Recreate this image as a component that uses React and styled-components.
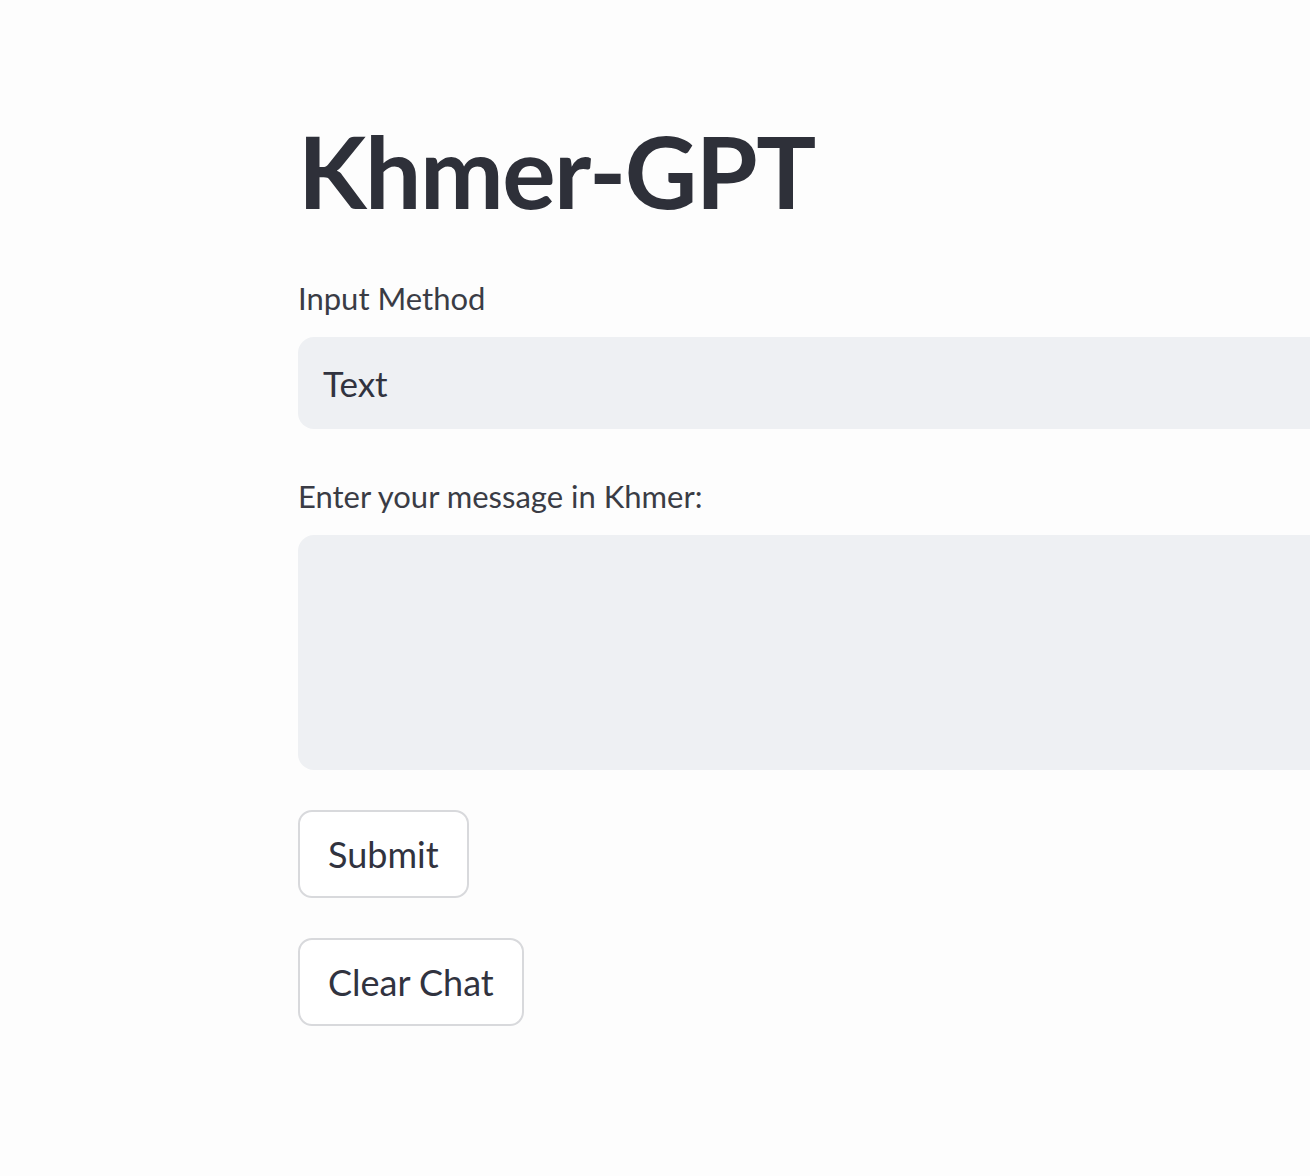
import React from 'react';
import styled, { createGlobalStyle } from 'styled-components';

const GlobalStyle = createGlobalStyle`
  html, body {
    margin: 0;
    padding: 0;
    background: #fdfdfd;
    overflow: hidden;
  }
  body {
    font-family: Lato, "Open Sans", sans-serif;
    color: #31333f;
  }
`;

const Page = styled.main`
  width: 1400px;
  padding: 115px 0 0 298px;
  box-sizing: border-box;
  min-height: 1176px;
`;

const Column = styled.div`
  width: 1100px;
  display: flex;
  flex-direction: column;
`;

const Title = styled.h1`
  margin: 0 0 53px;
  font-size: 100px;
  font-weight: 700;
  line-height: 110px;
  letter-spacing: -1.5px;
  color: #2e3039;
`;

const Field = styled.div`
  display: flex;
  flex-direction: column;
  margin-bottom: ${p => p.$gap || 40}px;
`;

const Label = styled.label`
  font-size: 31px;
  line-height: 40px;
  color: #3a3c45;
  margin-bottom: 19px;
`;

const SelectBox = styled.div`
  height: 92px;
  background: #eef0f3;
  border-radius: 16px;
  display: flex;
  align-items: center;
  padding-left: 25px;
  font-size: 35px;
  color: #31333f;
`;

const TextArea = styled.div`
  height: 235px;
  background: #eef0f3;
  border-radius: 16px;
`;

const Button = styled.button`
  align-self: flex-start;
  height: 88px;
  padding: 0 28px;
  margin-bottom: ${p => p.$gap || 40}px;
  background: #ffffff;
  border: 2px solid #d8d9dc;
  border-radius: 14px;
  font-family: inherit;
  font-size: 36px;
  color: #31333f;
`;

export default function App() {
  return (
    <>
      <GlobalStyle />
      <Page>
        <Column>
          <Title>Khmer-GPT</Title>
          <Field $gap={47}>
            <Label>Input Method</Label>
            <SelectBox>Text</SelectBox>
          </Field>
          <Field $gap={40}>
            <Label>Enter your message in Khmer:</Label>
            <TextArea />
          </Field>
          <Button>Submit</Button>
          <Button>Clear Chat</Button>
        </Column>
      </Page>
    </>
  );
}
